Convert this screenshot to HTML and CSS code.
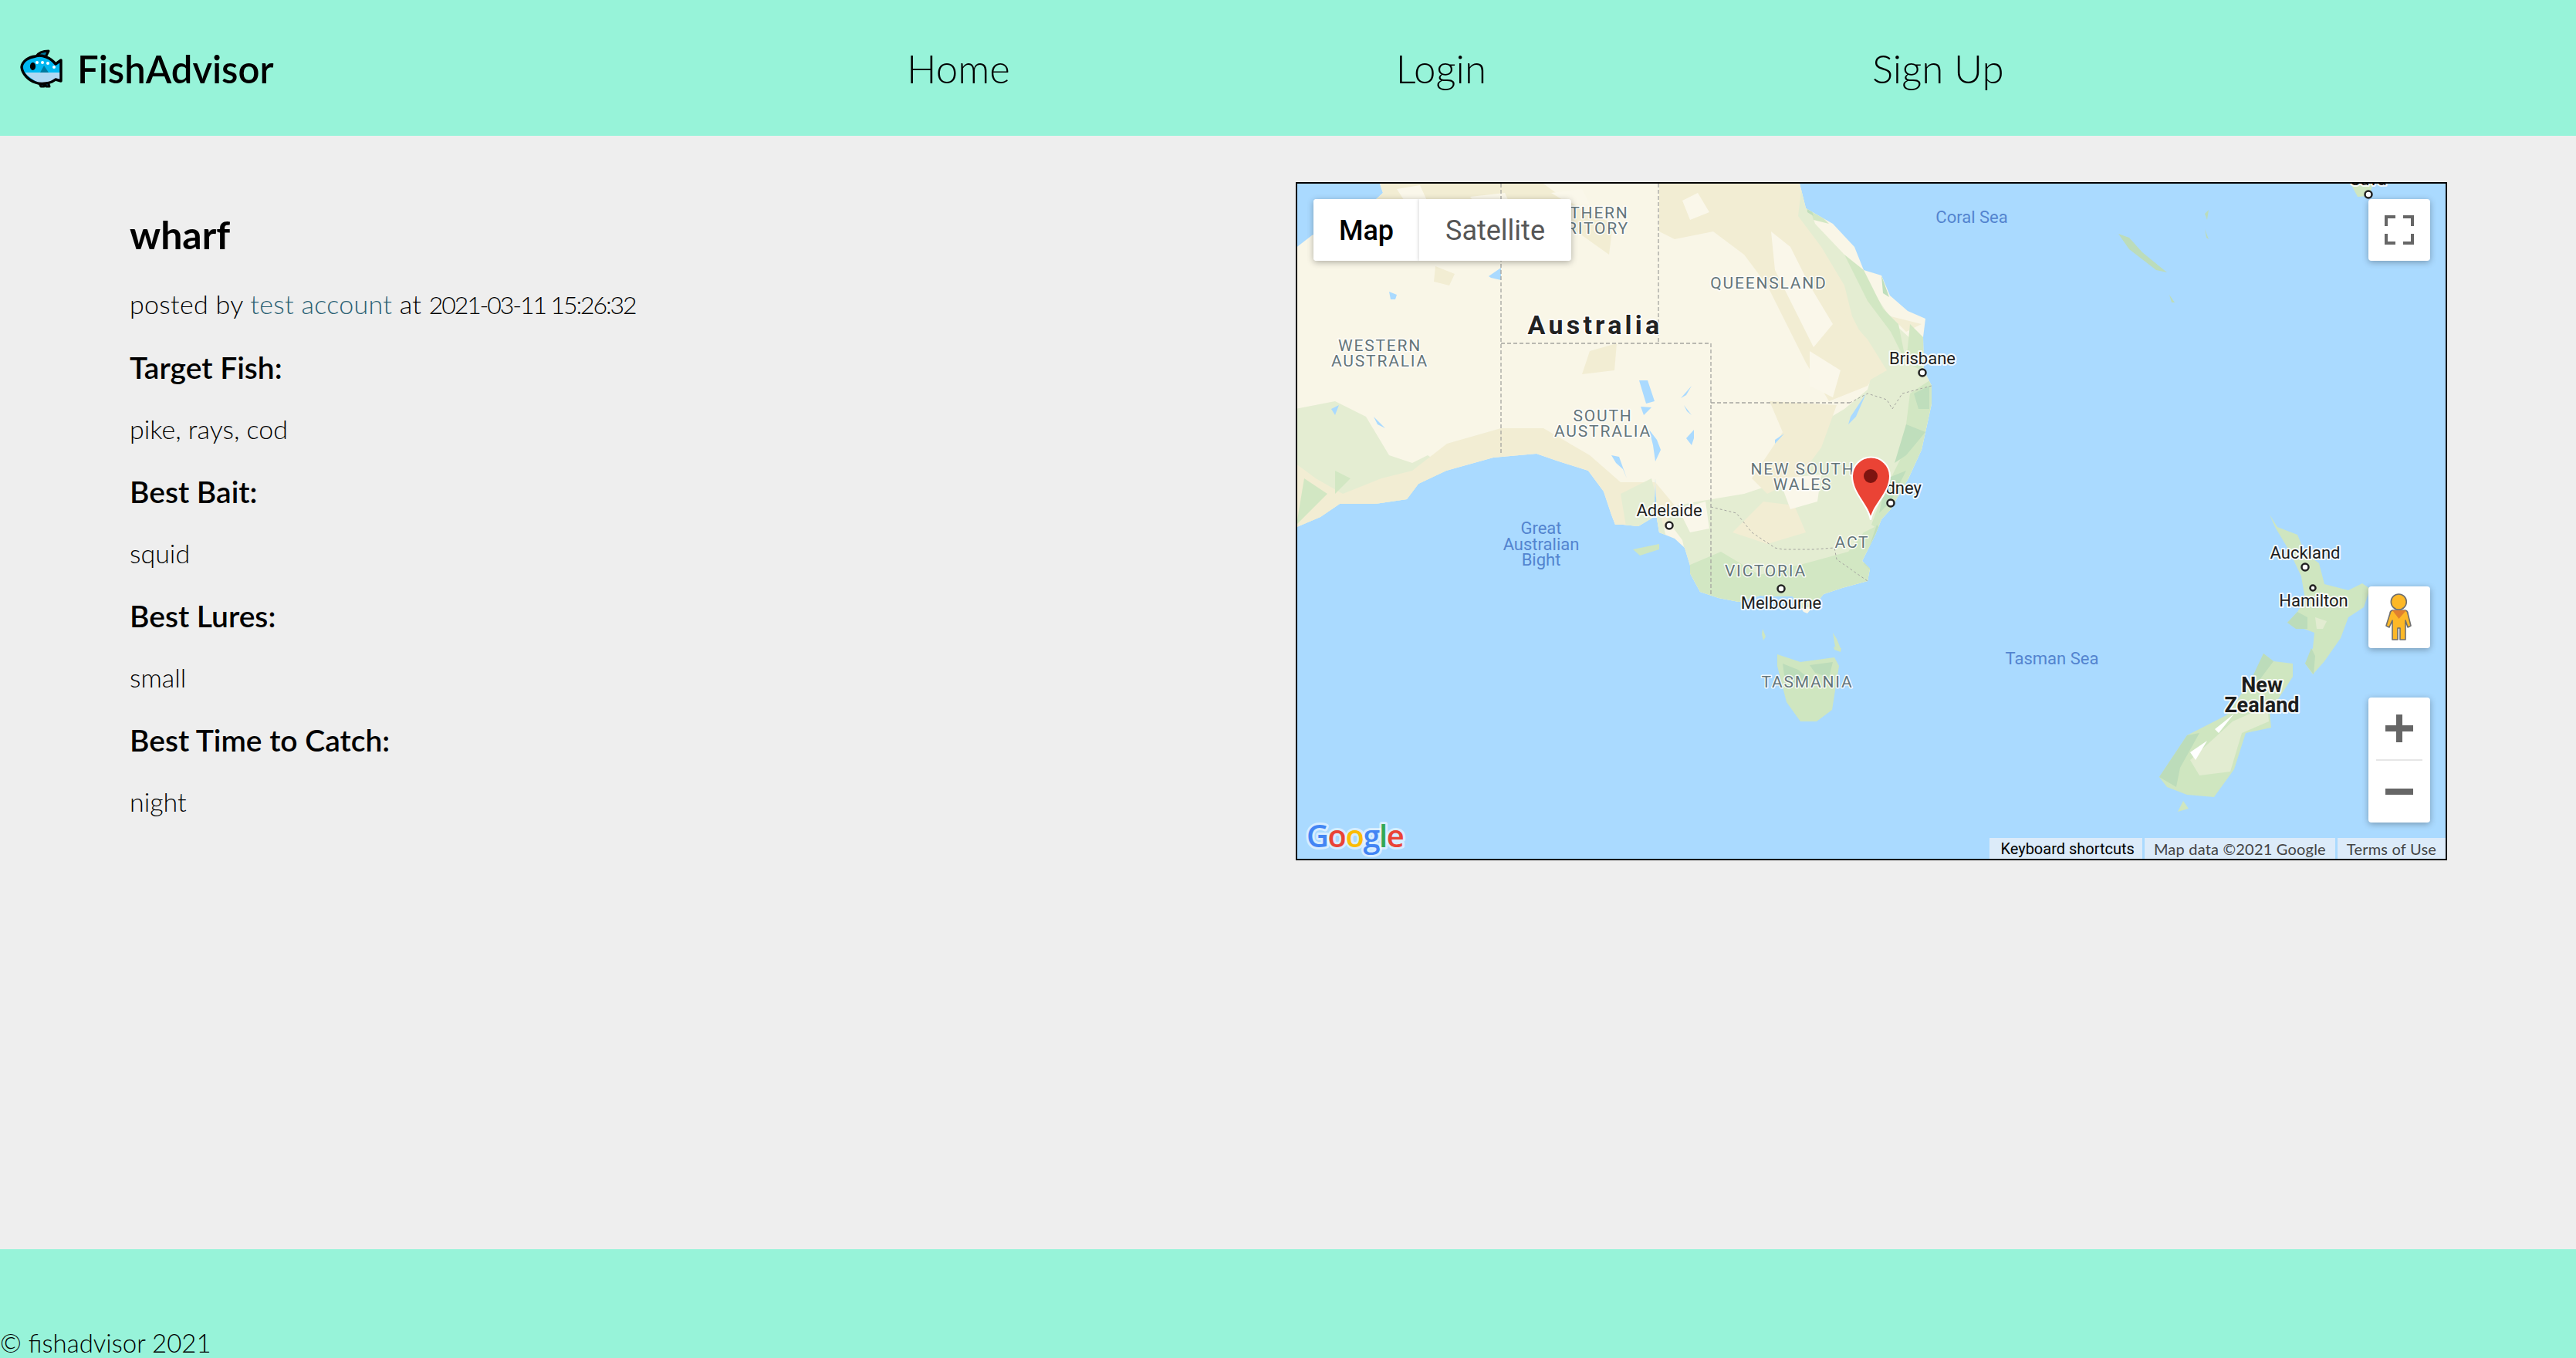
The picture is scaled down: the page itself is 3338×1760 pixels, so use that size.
FILE: index.html
```html
<!DOCTYPE html>
<html lang="en">
<head>
<meta charset="utf-8">
<title>FishAdvisor</title>
<link rel="stylesheet" href="styles.css">
</head>
<body>
<header class="site-header">
  <a class="brand" href="#">
    <svg class="fish" viewBox="0 0 70 60" aria-hidden="true">
      <defs><clipPath id="fishBody"><path d="M8 29C9 21 17 16 26 15C34 12 46 17 52 25L59 20V47L52 45C46 50 34 52 26 49C17 46 9 38 8 29Z"/></clipPath></defs>
      <path d="M27 15C30 10 36 8 43 8L39 16ZM30 48L33 54L37 54L37 50L40 54L44 54L42 48Z" fill="#00779b" stroke="#000" stroke-width="3" stroke-linejoin="round"/>
      <g clip-path="url(#fishBody)">
        <rect x="0" y="0" width="70" height="36" fill="#00b8f1"/>
        <rect x="0" y="36" width="70" height="24" fill="#b0d9f3"/>
        <path d="M8 29C12 38 20 44 28 48L24 52L4 40Z" fill="#00b8f1"/>
        <path d="M32 36L37 27L43 36Z" fill="#007a9f"/>
      </g>
      <path d="M8 29C9 21 17 16 26 15C34 12 46 17 52 25L59 20V47L52 45C46 50 34 52 26 49C17 46 9 38 8 29Z" fill="none" stroke="#000" stroke-width="3.4" stroke-linejoin="round"/>
      <ellipse cx="22.500" cy="28" rx="3.600" ry="5" fill="#000"/>
      <circle cx="28" cy="23" r="2" fill="#fff"/><circle cx="35" cy="23" r="2" fill="#fff"/><circle cx="42" cy="24" r="2" fill="#fff"/><circle cx="50" cy="29" r="2" fill="#fff"/>
    </svg>
    <span class="brand-name">FishAdvisor</span>
  </a>
  <nav class="site-nav">
    <a href="#">Home</a>
    <a href="#">Login</a>
    <a href="#">Sign Up</a>
  </nav>
</header>

<main class="content">
  <article class="post">
    <h1>wharf</h1>
    <p class="meta">posted by <a href="#">test account</a> at <span class="stamp">2021-03-11 15:26:32</span></p>
    <h3>Target Fish:</h3>
    <p>pike, rays, cod</p>
    <h3>Best Bait:</h3>
    <p>squid</p>
    <h3>Best Lures:</h3>
    <p>small</p>
    <h3>Best Time to Catch:</h3>
    <p>night</p>
  </article>

  <section class="map">
    <svg class="map-art" viewBox="1681 238 1488 875" aria-label="Map of Australia and New Zealand">
      <defs>
        <clipPath id="aus"><path d="M1788 238L1792 250L1770 270L1730 290L1700 305L1678 322V684L1711 670L1736 653L1782 653L1823 647L1838 627L1874 610L1935 593L1991 588L2017 597L2058 610L2078 637L2088 667L2093 680L2103 680L2123 682L2143 670L2145 620L2147 672L2150 690L2170 698L2183 710L2190 733L2190 743L2203 767L2227 775L2253 780L2280 772L2307 773L2323 773L2337 793L2342 795L2363 770L2387 762L2420 753L2423 737L2413 727L2430 693L2438 673L2450 660L2473 620L2490 583L2503 523L2503 500L2493 480L2492 437L2495 413L2472 403L2449 383L2438 357L2415 350L2403 320L2375 290L2340 270L2332 238Z"/></clipPath>
      </defs>
      <rect class="sea" x="1681" y="238" width="1488" height="875"/>
      <path class="land" d="M1788 238L1792 250L1770 270L1730 290L1700 305L1678 322V684L1711 670L1736 653L1782 653L1823 647L1838 627L1874 610L1935 593L1991 588L2017 597L2058 610L2078 637L2088 667L2093 680L2103 680L2123 682L2143 670L2145 620L2147 672L2150 690L2170 698L2183 710L2190 733L2190 743L2203 767L2227 775L2253 780L2280 772L2307 773L2323 773L2337 793L2342 795L2363 770L2387 762L2420 753L2423 737L2413 727L2430 693L2438 673L2450 660L2473 620L2490 583L2503 523L2503 500L2493 480L2492 437L2495 413L2472 403L2449 383L2438 357L2415 350L2403 320L2375 290L2340 270L2332 238Z"/>
      <g clip-path="url(#aus)">
        <path class="tan" d="M1790 238H2000L2030 260L2090 290L2085 330L2050 305L2010 290L1980 300L1950 290L1900 285L1850 275L1800 290L1760 290ZM1860 345L1885 355L1878 370L1858 365ZM2060 455L2095 445L2092 480L2050 485Z"/>
        <path class="cream" d="M1810 245L1840 240L1850 262L1825 268ZM1905 255L1950 250L1960 272L1920 275ZM2010 250L2050 245L2060 265L2030 262Z"/>
        <path class="tan" d="M2150 238H2335L2350 290L2385 340L2400 400L2440 470L2420 500L2370 520L2340 470L2310 410L2290 370L2260 330L2220 300L2170 310L2150 300Z"/>
        <path class="cream" d="M2295 300L2320 320L2345 370L2375 420L2350 450L2325 400L2300 350ZM2180 260L2200 250L2215 275L2190 285Z"/>
        <path class="pale" d="M2335 238L2352 290L2390 330L2415 360L2455 420L2510 470L2510 530L2470 620L2440 680L2425 780L2200 790L2180 700L2150 660L2200 650L2260 640L2320 620L2340 560L2390 530L2420 505L2430 470L2400 410L2390 370L2360 320L2330 280Z"/>
        <path class="tan" d="M2293 520L2380 525L2360 580L2330 620L2290 640L2270 620L2310 560ZM2245 690L2285 650L2325 655L2340 690L2290 705ZM2380 395L2420 440L2445 480L2410 500L2390 450ZM2490 420L2470 430L2450 410Z"/>
        <path class="cream" d="M2305 620L2360 615L2355 650L2320 660ZM2175 660L2210 650L2215 685L2190 690ZM2345 455L2385 480L2375 515L2345 500Z"/>
        <path class="pale" d="M1678 530L1730 520L1770 540L1800 590L1830 600L1850 590L1880 610L1820 660L1678 690Z"/>
        <path class="tan" d="M1678 690V600L1705 620L1740 640L1790 620L1830 610L1875 575L1945 555L2000 555L2060 590L2100 625L2145 625L2170 655L2150 700L2090 700L2060 625L2010 595L1950 600L1880 620L1820 660Z"/>
        <path class="green" d="M1690 620L1720 640L1680 680ZM1730 610L1750 620L1730 640Z"/>
        <path class="pale" d="M2100 640L2140 620L2150 660L2160 700L2110 700Z"/>
        <path class="green" d="M2183 735L2230 715L2280 745L2340 730L2395 715L2415 690L2435 680L2425 780L2200 800Z"/>
        <path class="green" d="M2505 490L2475 510L2465 590L2440 640L2425 680L2440 690L2480 620L2510 530Z"/>
        <path class="deep" d="M2480 510L2500 500L2500 530L2486 530ZM2470 550L2495 560L2470 590L2455 600ZM2445 620L2470 610L2450 650L2435 665ZM2432 680L2440 690L2425 740L2415 730Z"/>
        <path class="green" d="M2335 238L2350 285L2370 290L2345 265ZM2390 330L2415 350L2440 400L2460 420L2470 470L2450 430L2420 390ZM2475 420L2495 440L2490 480L2470 470Z"/>
        <path class="deep" d="M2340 250L2350 280L2342 275ZM2438 357L2448 385L2440 380Z"/>
        <path class="water" d="M2124 493L2135 493L2144 520L2133 523L2130 513ZM2137 557L2147 570L2152 583L2145 598L2142 577ZM2185 568L2195 557L2195 568L2192 577ZM2088 590L2098 592L2108 620L2103 608L2094 600ZM2126 527L2140 528L2130 538ZM2192 500L2185 512L2178 516ZM2182 525L2192 538L2186 533ZM1929 358L1945 347V363L1932 360ZM1800 378L1810 382L1808 388H1802ZM1725 530L1735 525L1730 538ZM1780 540L1795 555L1785 550ZM2300 570L2312 562L2300 575ZM2398 540L2418 510L2405 540L2395 550Z"/>
      </g>
      <path class="green-isle" d="M2116 712L2150 705L2150 712L2125 720Z"/>
      <path class="green-isle" d="M2303 848L2333 858L2377 852L2383 863L2374 920L2354 935L2333 935L2315 910L2303 863Z"/>
      <path class="deep-isle" d="M2310 860L2330 868L2345 880L2325 885L2312 875ZM2345 862L2375 858L2370 878L2352 872Z"/>
      <path class="green-isle" d="M2284 815L2288 825L2285 830L2283 822ZM2375 820L2380 828L2385 840L2378 838ZM2376 838L2386 840L2385 845L2377 842Z"/>
      <path class="deep-isle" d="M2745 303L2759 308L2776 327L2808 353L2794 350L2759 323ZM2811 382L2818 392L2814 392ZM2857 297L2862 310L2859 308ZM2857 277L2862 272L2860 285Z"/>
      <path class="green-isle" d="M3046 238L3075 238L3070 254L3055 255Z"/>
      <path class="green-isle" d="M2941 667L2951 683L2977 693L2987 717L3005 730L3012 757L3043 765L3061 756L3071 763L3063 787L3043 800L3033 827L3012 857L2997 874L2987 860L2997 840L2999 820L2964 807L2977 793L2987 777L2982 747L2966 713L2948 683Z"/>
      <path class="deep-isle" d="M2964 807L2977 793L2990 800L2990 815L2975 815ZM2987 860L2995 840L3000 850L2998 874Z"/>
      <path class="pale-isle2" d="M3000 800L3015 805L3010 815L3002 815Z"/>
      <path class="green-isle" d="M2933 847L2946 857L2971 860L2971 877L2941 923L2943 943L2910 950L2895 997L2869 1033L2834 1030L2808 1020L2798 1007L2834 953L2885 927L2920 877Z"/>
      <path class="pale-isle2" d="M2893 935L2938 915L2940 935L2905 950L2890 1000L2850 1005L2838 985Z"/>
      <path class="deep-isle" d="M2798 1007L2834 953L2850 950L2825 995L2820 1020ZM2933 847L2946 857L2925 885L2915 885Z"/>
      <path class="snow" d="M2838 975L2860 960L2845 985ZM2870 945L2895 925L2875 950Z"/>
      <path class="green-isle" d="M2829 1038L2836 1048L2822 1052Z"/>

      <g class="borders">
        <path d="M1945 238V590M2149 238V445M1945 445H2217V770M2217 522H2397"/>
        <path class="fine" d="M2397 522L2420 510L2445 518L2452 530L2465 510L2503 500M2217 657L2250 665L2270 690L2300 710L2310 712L2350 712L2377 710L2380 725L2420 753"/>
      </g>

      <g class="states">
        <text x="2049" y="283">NORTHERN</text><text x="2049" y="303">TERRITORY</text>
        <text x="1788" y="455">WESTERN</text><text x="1788" y="475">AUSTRALIA</text>
        <text x="2292" y="374">QUEENSLAND</text>
        <text x="2077" y="546">SOUTH</text><text x="2077" y="566">AUSTRALIA</text>
        <text x="2336" y="615">NEW SOUTH</text><text x="2336" y="635">WALES</text>
        <text x="2400" y="710">ACT</text>
        <text x="2288" y="747">VICTORIA</text>
        <text x="2342" y="891">TASMANIA</text>
      </g>
      <text class="country" x="2067" y="433">Australia</text>
      <g class="seas">
        <text x="2555" y="289">Coral Sea</text>
        <text x="1997" y="692">Great</text><text x="1997" y="713">Australian</text><text x="1997" y="733">Bight</text>
        <text x="2659" y="861">Tasman Sea</text>
      </g>
      <g class="cities">
        <text x="3069" y="240">Suva</text>
        <text x="2491" y="472">Brisbane</text>
        <text x="2455" y="640">Sydney</text>
        <text x="2163" y="669">Adelaide</text>
        <text x="2308" y="789">Melbourne</text>
        <text x="2987" y="724">Auckland</text>
        <text x="2998" y="786">Hamilton</text>
      </g>
      <g class="nz">
        <text x="2931" y="897">New</text><text x="2931" y="923">Zealand</text>
      </g>
      <g class="dots">
        <circle cx="3069" cy="252" r="4.500"/><circle cx="2491" cy="483" r="4.500"/><circle cx="2450" cy="652" r="4.500"/><circle cx="2163" cy="681" r="4.500"/><circle cx="2308" cy="763" r="4.500"/><circle cx="2987" cy="735" r="4.500"/><circle cx="2997" cy="762" r="3.500"/>
      </g>
      <path class="pin" d="M2424 674C2422 655 2400 640 2400 617A24.500 24.500 0 0 1 2449 617C2449 640 2426 655 2424 674Z"/>
      <circle class="pin-dot" cx="2424" cy="617" r="9"/>
      <text class="google" x="1693" y="1098"><tspan class="g-blue">G</tspan><tspan class="g-red">o</tspan><tspan class="g-yellow">o</tspan><tspan class="g-blue">g</tspan><tspan class="g-green">l</tspan><tspan class="g-red">e</tspan></text>
    </svg>

    <div class="map-type">
      <button class="type-btn active">Map</button>
      <button class="type-btn">Satellite</button>
    </div>
    <button class="ctl fullscreen" aria-label="Fullscreen">
      <svg viewBox="0 0 38 38"><path d="M2 14V2H14M24 2H36V14M36 24V36H24M14 36H2V24" fill="none" stroke="#666" stroke-width="4"/></svg>
    </button>
    <button class="ctl pegman" aria-label="Street View">
      <svg viewBox="9 10 80 80">
        <path d="M40 41L57 41Q60 42 60 45L64 61L60 63L57 54V79H50V64H47V79H40V54L36 63L32 61L37 45Q37 42 40 41Z" fill="#fdb827" stroke="#6f6f6f" stroke-width="1.600" stroke-linejoin="round"/>
        <path d="M40 41H58L48.500 52Z" fill="#e0802f"/>
        <circle cx="48.300" cy="30" r="10" fill="#fdb827" stroke="#6f6f6f" stroke-width="1.600"/>
      </svg>
    </button>
    <div class="zoom-ctl">
      <button class="zoom-btn" aria-label="Zoom in"><svg viewBox="0 0 38 38"><path d="M19 1V37M1 19H37" stroke="#666" stroke-width="8" fill="none"/></svg></button>
      <span class="zoom-sep"></span>
      <button class="zoom-btn" aria-label="Zoom out"><svg viewBox="0 0 38 38"><path d="M1 19H37" stroke="#666" stroke-width="8" fill="none"/></svg></button>
    </div>
    <div class="attrib">
      <span class="kb">Keyboard shortcuts</span>
      <span>Map data ©2021 Google</span>
      <span>Terms of Use</span>
    </div>
  </section>
</main>

<footer class="site-footer">© fishadvisor 2021</footer>
</body>
</html>
```

FILE: styles.css
```css
* { box-sizing: border-box; }
html, body { margin: 0; height: 100%; }
body {
  display: flex;
  flex-direction: column;
  min-height: 100vh;
  background: #eeeeee;
  color: #000;
  font-family: "Lato", "Open Sans", sans-serif;
  overflow: hidden;
}
a { color: inherit; text-decoration: none; }

.site-header {
  height: 176px;
  flex: none;
  display: flex;
  align-items: center;
  background: #97f3d9;
}
.brand { display: flex; align-items: center; margin-left: 20px; width: 1155px; }
.fish { width: 70px; height: 60px; flex: none; }
.brand-name { margin-left: 10px; font-size: 49px; font-weight: 600; color: #000; position: relative; top: 1px; }
.site-nav { display: flex; gap: 500px; font-size: 51px; font-weight: 300; }

.content {
  flex: 1;
  display: grid;
  grid-template-columns: 1fr 1492px;
  padding: 60px 167px 0 168px;
}
.post h1 { margin: 38px 0 0; font-size: 50px; line-height: 60px; font-weight: 700; }
.post p { margin: 0; font-size: 34px; line-height: 40px; font-weight: 300; }
.post h3 { margin: 39px 0 0; font-size: 39px; line-height: 44px; font-weight: 600; }
.post .meta { margin-top: 40px; letter-spacing: .3px; }
.post .meta a { color: #2a6173; }
.post .stamp { font-size: 32px; letter-spacing: -2.100px; }
.post h3 + p { margin-top: 38px; }

.map {
  position: relative;
  width: 1492px;
  height: 879px;
  border: 2px solid #000;
  overflow: hidden;
  font-family: "Roboto", sans-serif;
}
.map-art { display: block; width: 1488px; height: 875px; }
.sea { fill: #aadaff; }
.land { fill: #f9f6e7; }
.tan { fill: #f2edd3; }
.pale { fill: #e4edd2; }
.green { fill: #d2e7c3; }
.deep { fill: #bfdebc; }
.cream { fill: #faf7ea; }
.water { fill: #aadaff; }
.green-isle { fill: #cfe6c0; }
.pale-isle2 { fill: #e2ecd1; }
.deep-isle { fill: #bcdcba; }
.snow { fill: #fff; }
.borders path { fill: none; stroke: #a5a5a0; stroke-width: 1.300; stroke-dasharray: 5 3; }
.borders .fine { stroke-width: 1; stroke-dasharray: 3 3; }

.states text, .country, .seas text, .cities text, .nz text { text-anchor: middle; paint-order: stroke; stroke-linejoin: round; }
.states text { font-size: 21px; letter-spacing: 1.800px; fill: #64757a; stroke: rgba(255,255,255,.85); stroke-width: 3px; }
.country { font-size: 34px; font-weight: 700; letter-spacing: 4.200px; fill: #222; stroke: #fff; stroke-width: 3px; }
.seas text { font-size: 22px; fill: #5384cf; }
.cities text { font-size: 22px; fill: #1d1d1d; stroke: rgba(255,255,255,.85); stroke-width: 4px; }
.nz text { font-size: 27px; font-weight: 700; fill: #1d1d1d; stroke: rgba(255,255,255,.85); stroke-width: 4px; }
.dots circle { fill: #fff; stroke: #222; stroke-width: 2.500px; }
.pin { fill: #ea4335; stroke: #fff; stroke-width: 2px; }
.pin-dot { fill: #7e1410; }
.google { font-family: "Open Sans", sans-serif; font-size: 40px; font-weight: 600; paint-order: stroke; stroke: rgba(255,255,255,.55); stroke-width: 6px; stroke-linejoin: round; letter-spacing: -1.500px; }
.g-blue { fill: #4285f4; }
.g-red { fill: #ea4335; }
.g-yellow { fill: #fbbc05; }
.g-green { fill: #34a853; }

button { font-family: inherit; border: 0; padding: 0; background: #fff; }
.map-type {
  position: absolute;
  left: 21px;
  top: 20px;
  display: flex;
  height: 80px;
  border-radius: 4px;
  background: #fff;
  box-shadow: 0 2px 8px rgba(0,0,0,.3);
  overflow: hidden;
}
.type-btn { height: 80px; padding-top: 2px; font-size: 36px; color: #565656; width: 197px; box-shadow: -1px 0 4px rgba(0,0,0,.15); }
.type-btn.active { color: #000; font-weight: 500; width: 137px; box-shadow: none; }
.ctl {
  position: absolute;
  right: 20px;
  width: 80px;
  height: 80px;
  border-radius: 4px;
  box-shadow: 0 2px 8px rgba(0,0,0,.3);
  display: flex;
  align-items: center;
  justify-content: center;
}
.ctl svg { display: block; }
.fullscreen { top: 20px; }
.fullscreen svg { width: 38px; height: 38px; }
.pegman { top: 522px; }
.pegman svg { width: 80px; height: 80px; }
.zoom-ctl {
  position: absolute;
  right: 20px;
  top: 666px;
  width: 80px;
  height: 162px;
  border-radius: 4px;
  background: #fff;
  box-shadow: 0 2px 8px rgba(0,0,0,.3);
  display: flex;
  flex-direction: column;
  align-items: center;
}
.zoom-btn { width: 80px; height: 80px; display: flex; align-items: center; justify-content: center; background: none; }
.zoom-btn svg { width: 38px; height: 38px; display: block; }
.zoom-sep { width: 60px; height: 2px; background: #e6e6e6; flex: none; }
.attrib {
  position: absolute;
  right: 0;
  bottom: 0;
  display: flex;
  gap: 3px;
  font-family: "Lato", sans-serif;
  font-size: 20px;
  line-height: 29px;
  letter-spacing: .2px;
  color: #444;
}
.attrib span { background: #dcebf9; padding: 0 12px; height: 27px; white-space: nowrap; }
.attrib .kb { color: #000; font-family: "Roboto", sans-serif; letter-spacing: 0; padding: 0 10px 0 14px; }

.site-footer {
  height: 141px;
  flex: none;
  display: flex;
  align-items: flex-end;
  background: #97f3d9;
  font-size: 33px;
  font-weight: 300;
  line-height: 40px;
}
```
